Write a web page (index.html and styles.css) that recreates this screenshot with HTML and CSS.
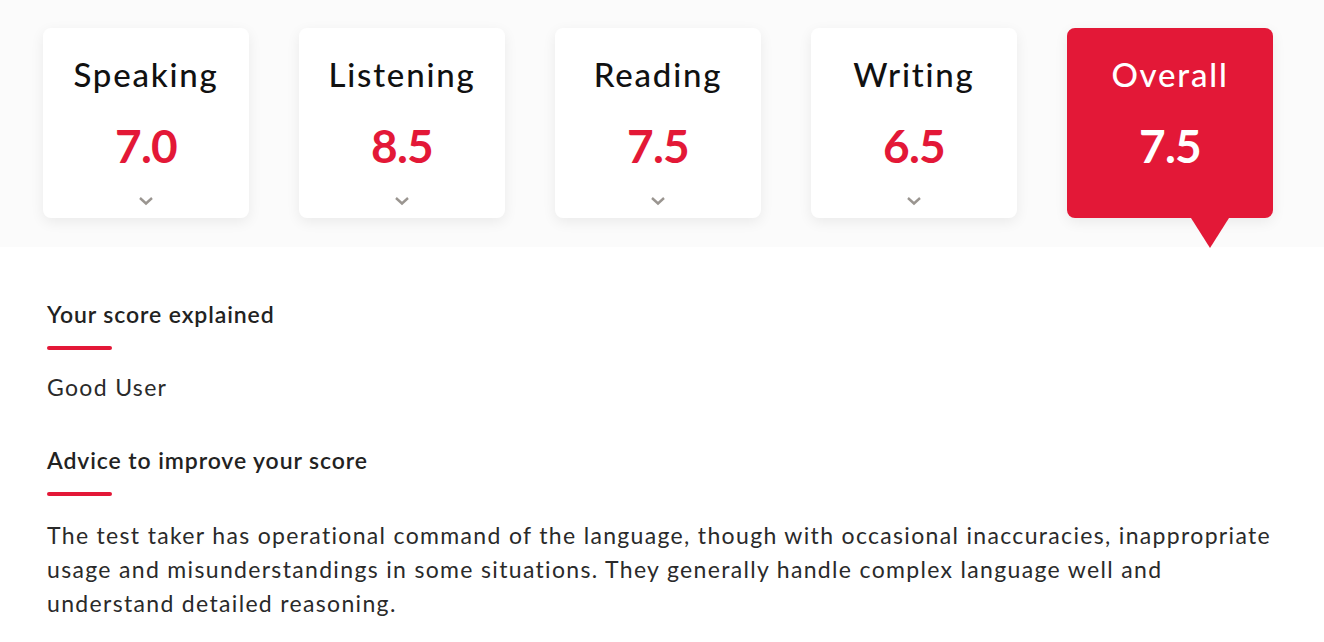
FILE: index.html
```html
<!DOCTYPE html>
<html>
<head>
<meta charset="utf-8">
<link rel="stylesheet" href="styles.css">
</head>
<body>
<section class="scores">
  <div class="card">
    <div class="card-title">Speaking</div>
    <div class="card-score">7.0</div>
    <svg class="chev" width="16" height="10" viewBox="0 0 16 10"><path d="M2 2 L8 7.5 L14 2" fill="none" stroke="#9a9590" stroke-width="2.4"/></svg>
  </div>
  <div class="card">
    <div class="card-title">Listening</div>
    <div class="card-score">8.5</div>
    <svg class="chev" width="16" height="10" viewBox="0 0 16 10"><path d="M2 2 L8 7.5 L14 2" fill="none" stroke="#9a9590" stroke-width="2.4"/></svg>
  </div>
  <div class="card">
    <div class="card-title">Reading</div>
    <div class="card-score">7.5</div>
    <svg class="chev" width="16" height="10" viewBox="0 0 16 10"><path d="M2 2 L8 7.5 L14 2" fill="none" stroke="#9a9590" stroke-width="2.4"/></svg>
  </div>
  <div class="card">
    <div class="card-title">Writing</div>
    <div class="card-score">6.5</div>
    <svg class="chev" width="16" height="10" viewBox="0 0 16 10"><path d="M2 2 L8 7.5 L14 2" fill="none" stroke="#9a9590" stroke-width="2.4"/></svg>
  </div>
  <div class="card card-overall">
    <div class="card-title">Overall</div>
    <div class="card-score">7.5</div>
    <span class="pointer"></span>
  </div>
</section>
<section class="explain">
  <h2 class="heading">Your score explained</h2>
  <div class="rule"></div>
  <p class="text">Good User</p>
  <h2 class="heading heading-2">Advice to improve your score</h2>
  <div class="rule"></div>
  <p class="text text-long">The test taker has operational command of the language, though with occasional inaccuracies, inappropriate usage and misunderstandings in some situations. They generally handle complex language well and understand detailed reasoning.</p>
</section>
</body>
</html>
```
FILE: styles.css
```css
* { box-sizing: border-box; }
html, body { margin: 0; padding: 0; background: #fff; }
body { font-family: "Lato", "Open Sans", sans-serif; color: #222; }

.scores {
  height: 247px;
  background: #fbfbfb;
  padding: 28px 0 0 43px;
  display: flex;
  gap: 50px;
}
.card {
  position: relative;
  width: 206px;
  height: 190px;
  background: #fff;
  border-radius: 8px;
  box-shadow: 0 4px 14px rgba(0,0,0,0.07);
  display: flex;
  flex-direction: column;
  align-items: center;
}
.card-title {
  margin-top: 26px;
  font-size: 33px;
  font-weight: 500;
  line-height: 40px;
  letter-spacing: 1.8px;
  color: #111;
}
.card-score {
  margin-top: 28px;
  font-size: 46px;
  font-weight: 700;
  line-height: 48px;
  letter-spacing: -0.8px;
  color: #e31837;
}
.chev { margin-top: 26px; }
.card-overall { background: #e31837; }
.card-overall .card-title,
.card-overall .card-score { color: #fff; }
.pointer {
  position: absolute;
  left: 124px;
  top: 190px;
  width: 0; height: 0;
  border-left: 19px solid transparent;
  border-right: 19px solid transparent;
  border-top: 30px solid #e31837;
}

.explain { padding: 50px 47px 0; }
.heading {
  margin: 0;
  font-size: 23px;
  font-weight: 600;
  line-height: 34px;
  letter-spacing: 0.9px;
  color: #222;
}
.heading-2 { margin-top: 39px; }
.rule {
  width: 65px;
  height: 4px;
  border-radius: 2px;
  background: #e31837;
  margin-top: 15px;
}
.text {
  margin: 20px 0 0;
  font-size: 23px;
  line-height: 34px;
  letter-spacing: 1.33px;
  color: #2a2a2a;
}
.text-long { margin-top: 22px; }
```
